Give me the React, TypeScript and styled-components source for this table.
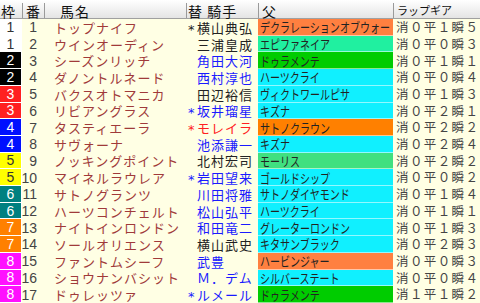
import React from "react";
import styled, { createGlobalStyle } from "styled-components";

const Global = createGlobalStyle`
  html, body { margin: 0; padding: 0; background: #ffffe4; }
  body { font-family: "Noto Sans CJK JP", "Noto Sans", sans-serif; line-height: 1; }
`;

const COLS = "22px 22px 142px 72px 135px 1fr";

const Table = styled.div`
  width: 480px;
  height: 303px;
  display: flex;
  flex-direction: column;
  background: #ffffe4;
  overflow: hidden;
`;

const Header = styled.div`
  height: 19px;
  flex: 0 0 19px;
  display: grid;
  grid-template-columns: ${COLS};
  background: linear-gradient(#ffffff, #e4e4e4);
  border-bottom: 1px solid #a0a0a0;
  box-sizing: border-box;
`;

const HeadCell = styled.div<{ $pad?: number; $small?: boolean }>`
  display: flex;
  align-items: center;
  padding-left: ${(p) => p.$pad ?? 2}px;
  font-size: ${(p) => (p.$small ? 11 : 14)}px;
  color: #111;
  border-left: 1px solid #9a9a9a;
  margin: 3px 0 0;
  white-space: nowrap;
  letter-spacing: ${(p) => (p.$small ? 0 : 1)}px;
  &:first-child { border-left: none; }
`;

const Row = styled.div`
  flex: 1 1 0;
  display: grid;
  grid-template-columns: ${COLS};
  grid-template-rows: minmax(0, 1fr);
  min-height: 0;
  overflow: hidden;
`;

const Frame = styled.div<{ $bg: string; $fg: string }>`
  background: ${(p) => p.$bg};
  color: ${(p) => p.$fg};
  border-bottom: 1px solid #ffffff;
  border-right: 1px solid #ffffff;
  display: flex;
  align-items: center;
  justify-content: center;
  font-family: "Liberation Sans", sans-serif;
  font-size: 14px;
  min-height: 0;
`;

const Num = styled.div`
  display: flex;
  align-items: center;
  justify-content: flex-end;
  padding-right: 7px;
  color: #444;
  font-family: "Liberation Sans", sans-serif;
  font-size: 14px;
  min-height: 0;
`;

const Horse = styled.div`
  display: flex;
  align-items: center;
  padding-left: 10px;
  color: #a03a3a;
  font-size: 13px;
  letter-spacing: 1px;
  white-space: nowrap;
  min-height: 0;
`;

const Jockey = styled.div<{ $color: string }>`
  display: flex;
  align-items: center;
  padding-left: 2px;
  color: ${(p) => p.$color};
  font-size: 13px;
  letter-spacing: 1px;
  white-space: nowrap;
  overflow: hidden;
  min-height: 0;
`;

const Mark = styled.span`
  display: inline-block;
  width: 9px;
  letter-spacing: 0;
  font-size: 13px;
  font-family: "DejaVu Sans", sans-serif;
  transform: translateY(2px);
`;

const Sire = styled.div<{ $bg: string }>`
  background: ${(p) => p.$bg};
  border-bottom: 1px solid rgba(255, 255, 255, 0.55);
  display: flex;
  align-items: center;
  padding-left: 2px;
  overflow: hidden;
  white-space: nowrap;
  min-height: 0;
`;

const SireText = styled.span`
  display: inline-block;
  font-size: 13px;
  color: #222;
  transform: scaleX(0.77);
  transform-origin: left center;
`;

const Gear = styled.div`
  display: flex;
  align-items: center;
  padding-left: 3px;
  color: #444;
  font-size: 12.5px;
  letter-spacing: 1.4px;
  white-space: nowrap;
  min-height: 0;
`;

const FRAME: Record<number, [string, string]> = {
  1: ["#ffffff", "#333"],
  2: ["#000000", "#ffffff"],
  3: ["#ff2020", "#ffffff"],
  4: ["#0010ff", "#ffffff"],
  5: ["#ffff00", "#333"],
  6: ["#008080", "#ffffff"],
  7: ["#ff8000", "#ffffff"],
  8: ["#ff10ff", "#ffffff"],
};

const ORANGE = "#ff8040";
const ORANGE2 = "#ff8000";
const MINT = "#20f0a0";
const GREEN = "#00cc00";
const CYAN = "#10f0ff";
const LGREEN = "#40e080";

const BLACK = "#222";
const BLUE = "#1a1aff";
const RED = "#ff2020";

type R = [number, number, string, string, boolean, string, string, string, string];

const rows: R[] = [
  [1, 1, "トップナイフ", "横山典弘", true, BLACK, "デクラレーションオブウォー", ORANGE, "消０平１瞬５"],
  [1, 2, "ウインオーディン", "三浦皇成", false, BLACK, "エピファネイア", MINT, "消０平０瞬３"],
  [2, 3, "シーズンリッチ", "角田大河", false, BLUE, "ドゥラメンテ", GREEN, "消０平１瞬１"],
  [2, 4, "ダノントルネード", "西村淳也", false, BLUE, "ハーツクライ", CYAN, "消０平０瞬４"],
  [3, 5, "バクスオトマニカ", "田辺裕信", false, BLACK, "ヴィクトワールピサ", CYAN, "消０平１瞬３"],
  [3, 6, "リビアングラス", "坂井瑠星", true, BLUE, "キズナ", CYAN, "消０平２瞬１"],
  [4, 7, "タスティエーラ", "モレイラ", true, RED, "サトノクラウン", ORANGE2, "消０平２瞬２"],
  [4, 8, "サヴォーナ", "池添謙一", false, BLUE, "キズナ", CYAN, "消０平２瞬４"],
  [5, 9, "ノッキングポイント", "北村宏司", false, BLACK, "モーリス", LGREEN, "消０平２瞬２"],
  [5, 10, "マイネルラウレア", "岩田望来", true, BLUE, "ゴールドシップ", CYAN, "消０平０瞬２"],
  [6, 11, "サトノグランツ", "川田将雅", false, BLUE, "サトノダイヤモンド", CYAN, "消０平１瞬４"],
  [6, 12, "ハーツコンチェルト", "松山弘平", false, BLUE, "ハーツクライ", CYAN, "消０平１瞬１"],
  [7, 13, "ナイトインロンドン", "和田竜二", false, BLUE, "グレーターロンドン", CYAN, "消０平１瞬３"],
  [7, 14, "ソールオリエンス", "横山武史", false, BLACK, "キタサンブラック", CYAN, "消０平２瞬３"],
  [8, 15, "ファントムシーフ", "武豊", false, BLUE, "ハービンジャー", ORANGE, "消０平０瞬３"],
  [8, 16, "ショウナンバシット", "Ｍ．デム", false, BLUE, "シルバーステート", CYAN, "消０平０瞬４"],
  [8, 17, "ドゥレッツァ", "ルメール", true, BLUE, "ドゥラメンテ", GREEN, "消１平１瞬２"],
];

export default function App() {
  return (
    <>
      <Global />
      <Table>
        <Header>
          <HeadCell $pad={1}>枠</HeadCell>
          <HeadCell $pad={3}>番</HeadCell>
          <HeadCell $pad={15}>馬名</HeadCell>
          <HeadCell $pad={1}>替&nbsp;騎手</HeadCell>
          <HeadCell $pad={3}>父</HeadCell>
          <HeadCell $pad={3} $small>ラップギア</HeadCell>
        </Header>
        {rows.map(([w, n, horse, jockey, star, jc, sire, sc, gear]) => (
          <Row key={n}>
            <Frame $bg={FRAME[w][0]} $fg={FRAME[w][1]}>{w}</Frame>
            <Num>{n}</Num>
            <Horse>{horse}</Horse>
            <Jockey $color={jc}>
              <Mark>{star ? "*" : ""}</Mark>
              {jockey}
            </Jockey>
            <Sire $bg={sc}>
              <SireText>{sire}</SireText>
            </Sire>
            <Gear>{gear}</Gear>
          </Row>
        ))}
      </Table>
    </>
  );
}
